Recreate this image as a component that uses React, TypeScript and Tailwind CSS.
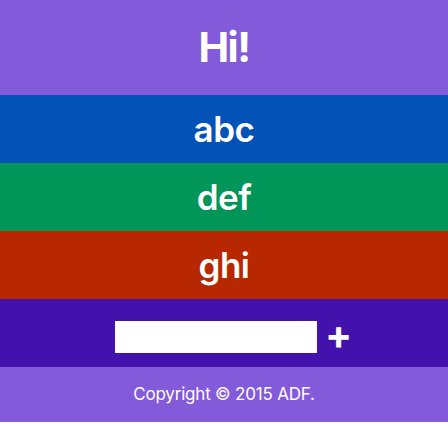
import { useState } from "react";

const items = [
  { label: "abc", bg: "bg-[#0252b7]" },
  { label: "def", bg: "bg-[#009659]" },
  { label: "ghi", bg: "bg-[#b72800]" },
];

export default function App() {
  const [text, setText] = useState("");

  return (
    <div className="w-full bg-white font-['Inter','Liberation_Sans',sans-serif] text-white">
      <header className="flex h-[95px] items-center justify-center bg-[#835ad9]">
        <h1 className="text-[41px] font-bold tracking-[-1.5px]">Hi!</h1>
      </header>

      <ul>
        {items.map((item) => (
          <li
            key={item.label}
            className={`flex h-[68px] items-center justify-center text-[35px] font-semibold tracking-[-0.5px] ${item.bg}`}
          >
            {item.label}
          </li>
        ))}
      </ul>

      <div className="flex h-[68px] items-center justify-center bg-[#4311ac] pl-[19px] pt-[8px]">
        <input
          value={text}
          onChange={(e) => setText(e.target.value)}
          className="h-[32px] w-[202px] bg-white px-2 text-black outline-none"
        />
        <button className="ml-[8px] pb-[4px] text-[40px] font-bold leading-none">+</button>
      </div>

      <footer className="flex h-[55px] items-center justify-center bg-[#835ad9] text-[17px] tracking-[-0.2px]">
        Copyright © 2015 ADF.
      </footer>
    </div>
  );
}
